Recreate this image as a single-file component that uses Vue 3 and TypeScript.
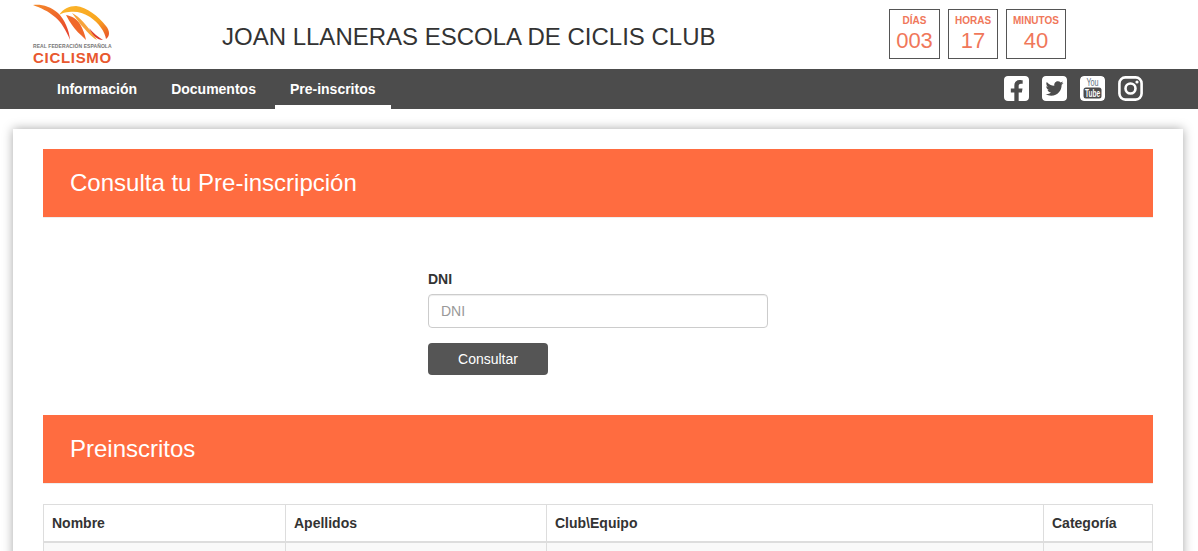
<template>
  <div class="page">
    <header class="top">
      <div class="logo-col">
        <div class="logo">
          <svg class="logo-mark" width="80" height="38" viewBox="0 0 80 38" aria-hidden="true">
            <defs>
              <linearGradient id="swoosh" x1="0" y1="0" x2="0.6" y2="1">
                <stop offset="0" stop-color="#f58a2a" />
                <stop offset="1" stop-color="#e8452c" />
              </linearGradient>
              <linearGradient id="band" x1="0" y1="0" x2="1" y2="0.9">
                <stop offset="0" stop-color="#fbb62c" />
                <stop offset="0.65" stop-color="#f9a51f" />
                <stop offset="1" stop-color="#e9582a" />
              </linearGradient>
            </defs>
            <path d="M0 1C8 0 17 2 25 9c7 7 11 17 12 27-4-10-9-18-15-23C15 7 8 4 0 1Z" fill="url(#swoosh)" />
            <path d="M26 11c4-6 10-9 17-9 11 1 22 10 30 20 4 5 4 10 0 13-1-7-7-16-16-22-7-5-15-6-21-5-3 0-7 1-10 3Z" fill="url(#band)" />
            <path d="M33 11c6 1 11 4 14 9 3 5 5 11 6 16-6-6-11-10-14-15-2-3-4-6-6-10Z" fill="#f0682a" />
            <path d="M39 9c8 4 15 13 21 21l4 6c-6-3-11-10-16-15-3-4-6-8-9-12Z" fill="#f7a33a" />
            <path d="M56 24c4 5 9 9 14 12-6 0-10-4-14-12Z" fill="#dc3a2c" />
          </svg>
          <span class="logo-small">REAL FEDERACIÓN ESPAÑOLA</span>
          <span class="logo-name">CICLISMO</span>
        </div>
      </div>
      <h1 class="title">JOAN LLANERAS ESCOLA DE CICLIS CLUB</h1>
      <div class="countdown">
        <div v-for="c in countdown" :key="c.label" class="count-box" :style="{ width: c.width + 'px' }">
          <span class="count-label">{{ c.label }}</span>
          <span class="count-value">{{ c.value }}</span>
        </div>
      </div>
    </header>

    <nav class="nav">
      <div class="tabs">
        <a v-for="t in tabs" :key="t" class="tab" :class="{ 'tab--active': t === 'Pre-inscritos' }">{{ t }}</a>
      </div>
      <div class="social">
        <svg class="icon" viewBox="0 32 448 448" aria-label="Facebook">
          <path fill="#fff" d="M400 32H48A48 48 0 0 0 0 80v352a48 48 0 0 0 48 48h137.25V327.69h-63V256h63v-54.64c0-62.15 37-96.48 93.67-96.48 27.14 0 55.52 4.84 55.52 4.84v61h-31.27c-30.81 0-40.42 19.12-40.42 38.73V256h68.78l-11 71.69h-57.78V480H400a48 48 0 0 0 48-48V80a48 48 0 0 0-48-48z" />
        </svg>
        <svg class="icon" viewBox="0 32 448 448" aria-label="Twitter">
          <path fill="#fff" d="M400 32H48C21.5 32 0 53.5 0 80v352c0 26.5 21.5 48 48 48h352c26.5 0 48-21.5 48-48V80c0-26.5-21.5-48-48-48zm-48.9 158.8c.2 2.8.2 5.7.2 8.5 0 86.7-66 186.6-186.6 186.6-37.2 0-71.7-10.8-100.7-29.4 5.3.6 10.4.8 15.8.8 30.7 0 58.9-10.4 81.4-28-28.8-.6-53-19.5-61.3-45.5 10.1 1.5 19.2 1.5 29.6-1.2-30-6.1-52.5-32.5-52.5-64.4v-.8c8.7 4.9 18.9 7.9 29.6 8.3a65.447 65.447 0 0 1-29.2-54.6c0-12.2 3.2-23.4 8.9-33.1 32.3 39.8 80.8 65.8 135.2 68.6-9.3-44.5 24-80.6 64-80.6 18.9 0 35.9 7.9 47.9 20.7 14.8-2.8 29-8.3 41.6-15.8-4.9 15.2-15.1 28-28.6 36 13.1-1.4 25.8-5 37.6-10.1-8.9 13.1-20.1 24.7-32.9 34z" />
        </svg>
        <svg class="icon" viewBox="0 0 25 25" aria-label="YouTube">
          <rect width="25" height="25" rx="4" fill="#fff" />
          <text transform="translate(12.5 10) scale(0.9 1.25)" class="yt-you">You</text>
          <rect x="3.5" y="11.5" width="18" height="11" rx="2.5" fill="#4c4c4c" />
          <text transform="translate(12.5 21) scale(0.82 1.3)" class="yt-tube">Tube</text>
        </svg>
        <svg class="icon" viewBox="0 0 25 25" aria-label="Instagram">
          <rect x="1.4" y="1.4" width="22.2" height="22.2" rx="6" fill="none" stroke="#fff" stroke-width="2.6" />
          <circle cx="12.5" cy="12.5" r="5" fill="none" stroke="#fff" stroke-width="2.6" />
          <circle cx="19" cy="6" r="1.6" fill="#fff" />
        </svg>
      </div>
    </nav>

    <main class="card">
      <h2 class="banner">Consulta tu Pre-inscripción</h2>
      <form class="form" @submit.prevent>
        <label class="label" for="dni">DNI</label>
        <input id="dni" class="input" type="text" placeholder="DNI" />
        <button class="btn" type="submit">Consultar</button>
      </form>
      <h2 class="banner">Preinscritos</h2>
      <table class="table">
        <thead>
          <tr>
            <th v-for="col in columns" :key="col.name" :style="{ width: col.width + 'px' }">{{ col.name }}</th>
          </tr>
        </thead>
        <tbody>
          <tr>
            <td v-for="col in columns" :key="col.name">&nbsp;</td>
          </tr>
        </tbody>
      </table>
    </main>
  </div>
</template>

<script setup lang="ts">
const countdown = [
  { label: "DÍAS", value: "003", width: 51 },
  { label: "HORAS", value: "17", width: 50 },
  { label: "MINUTOS", value: "40", width: 60 },
];

const tabs = ["Información", "Documentos", "Pre-inscritos"];

const columns = [
  { name: "Nombre", width: 242 },
  { name: "Apellidos", width: 261 },
  { name: "Club\\Equipo", width: 497 },
  { name: "Categoría", width: 109 },
];
</script>

<style>
html,
body {
  margin: 0;
  height: 551px;
  overflow: hidden;
  background: #fff;
}
</style>

<style scoped>
.page {
  font-family: "Liberation Sans", Arial, sans-serif;
  color: #333;
  font-size: 14px;
}

.top {
  display: flex;
  align-items: flex-start;
  height: 69px;
}

.logo-col {
  width: 222px;
  flex: none;
  padding: 4px 0 0 33px;
  box-sizing: border-box;
}

.logo {
  display: flex;
  flex-direction: column;
  width: 80px;
}

.logo-mark {
  display: block;
}

.logo-small {
  margin-top: 1px;
  font-size: 5px;
  line-height: 6px;
  font-weight: 700;
  color: #777;
  white-space: nowrap;
  letter-spacing: 0.08px;
}

.logo-name {
  margin-top: 1px;
  font-size: 15px;
  line-height: 15px;
  font-weight: 700;
  color: #e8582f;
  letter-spacing: 0.7px;
}

.title {
  width: 667px;
  flex: none;
  margin: 0;
  padding-top: 23px;
  font-size: 24px;
  line-height: 28px;
  font-weight: 400;
  color: #333;
  white-space: nowrap;
}

.countdown {
  display: flex;
  gap: 8px;
  padding-top: 9px;
}

.count-box {
  box-sizing: border-box;
  height: 50px;
  border: 1px solid #555;
  display: flex;
  flex-direction: column;
  align-items: center;
  color: #f0775a;
}

.count-label {
  margin-top: 5px;
  font-size: 10px;
  line-height: 12px;
  font-weight: 700;
}

.count-value {
  font-size: 22px;
  line-height: 28px;
}

.nav {
  height: 40px;
  background: #4c4c4c;
  display: flex;
  justify-content: space-between;
  padding: 0 55px 0 42px;
}

.tabs {
  display: flex;
  gap: 4px;
}

.tab {
  box-sizing: border-box;
  height: 40px;
  padding: 0 15px;
  line-height: 40px;
  font-size: 14px;
  font-weight: 700;
  color: #fff;
}

.tab--active {
  border-bottom: 4px solid #fff;
}

.social {
  display: flex;
  gap: 13px;
  padding-top: 7px;
}

.icon {
  width: 25px;
  height: 25px;
  display: block;
  overflow: hidden;
  border-radius: 4px;
}

.yt-you {
  font-family: "Liberation Sans", Arial, sans-serif;
  font-size: 8px;
  fill: #5f7481;
  text-anchor: middle;
}

.yt-tube {
  font-family: "Liberation Sans", Arial, sans-serif;
  font-size: 8px;
  font-weight: 700;
  fill: #fff;
  text-anchor: middle;
}

.card {
  margin: 20px 15px 0 13px;
  padding: 20px 30px;
  background: #fff;
  box-shadow: 0 0 10px rgba(0, 0, 0, 0.35);
}

.banner {
  margin: 0;
  height: 69px;
  padding-left: 27px;
  background: #ff6c40;
  border-bottom: 1px solid #eee;
  box-sizing: border-box;
  font-size: 24px;
  font-weight: 400;
  line-height: 67px;
  color: #fff;
}

.form {
  width: 340px;
  margin: 0 auto;
  padding: 53px 0 40px;
  display: flex;
  flex-direction: column;
  align-items: flex-start;
}

.label {
  font-weight: 700;
  line-height: 16px;
  margin-bottom: 7px;
  color: #333;
}

.input {
  box-sizing: border-box;
  width: 340px;
  height: 34px;
  padding: 0 12px;
  border: 1px solid #ccc;
  border-radius: 4px;
  font: 14px "Liberation Sans", Arial, sans-serif;
  color: #555;
  outline: none;
  box-shadow: inset 0 1px 1px rgba(0, 0, 0, 0.075);
}

.input::placeholder {
  color: #999;
}

.btn {
  width: 120px;
  height: 32px;
  margin-top: 15px;
  border: 0;
  border-radius: 4px;
  background: #555;
  color: #fff;
  font: 14px "Liberation Sans", Arial, sans-serif;
  cursor: pointer;
}

.table {
  box-sizing: border-box;
  width: 1109px;
  margin-top: 20px;
  border-collapse: collapse;
  table-layout: fixed;
}

.table th,
.table td {
  box-sizing: border-box;
  border: 1px solid #ddd;
  padding: 8px;
  line-height: 20px;
  text-align: left;
}

.table th {
  border-bottom-width: 2px;
  font-weight: 700;
}

.table td {
  background: #f9f9f9;
}
</style>
